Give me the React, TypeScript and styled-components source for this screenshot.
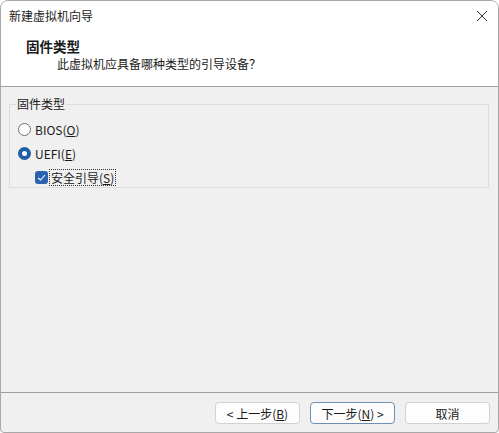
import * as React from 'react';
import styled, { createGlobalStyle } from 'styled-components';

const GlobalStyle = createGlobalStyle`
  html, body {
    margin: 0;
    padding: 0;
    background: #ffffff;
  }
  body {
    font-family: "Noto Sans CJK SC", "Noto Sans", sans-serif;
    font-size: 12px;
    color: #1a1a1a;
  }
`;

const Window = styled.div`
  box-sizing: border-box;
  width: 499px;
  height: 433px;
  display: flex;
  flex-direction: column;
  border: 1px solid #a8a8a8;
  border-radius: 8px 8px 4px 4px;
  overflow: hidden;
  background: #f0f0f0;
`;

const TitleBar = styled.div`
  height: 29px;
  display: flex;
  align-items: center;
  justify-content: space-between;
  padding: 0 10px 0 8px;
  background: #ffffff;
`;

const TitleText = styled.span`
  font-size: 12px;
  line-height: 16px;
`;

const CloseButton = styled.div`
  width: 12px;
  height: 12px;
  display: flex;
  align-items: center;
  justify-content: center;
`;

const Header = styled.div`
  height: 57px;
  background: #ffffff;
  border-bottom: 1px solid #a0a0a0;
  display: flex;
  flex-direction: column;
  padding: 8px 0 0 25px;
  box-sizing: border-box;
  gap: 2px;
`;

const HeaderTitle = styled.div`
  font-weight: bold;
  font-size: 13.5px;
  line-height: 16px;
`;

const HeaderSub = styled.div`
  line-height: 16px;
  padding-left: 31px;
`;

const Body = styled.div`
  flex: 1;
  padding: 9px 9px 0 8px;
`;

const GroupBox = styled.fieldset`
  margin: 0;
  padding: 8px 0 0 0;
  border: 1px solid #dcdcdc;
  height: 92px;
  box-sizing: border-box;
  display: flex;
  flex-direction: column;
  gap: 4.5px;
`;

const Legend = styled.legend`
  margin-left: 6px;
  padding: 0 1px;
  line-height: 16px;
`;

const OptionRow = styled.div<{ $indent?: boolean }>`
  height: 20px;
  display: flex;
  align-items: center;
  gap: ${(p) => (p.$indent ? '2px' : '3px')};
  padding-left: ${(p) => (p.$indent ? '25px' : '8px')};
`;

const Radio = styled.span<{ $checked?: boolean }>`
  box-sizing: border-box;
  width: 13px;
  height: 13px;
  border-radius: 50%;
  border: ${(p) => (p.$checked ? '4px solid #1f5ea8' : '1px solid #6f6f6f')};
  background: #ffffff;
`;

const CheckBox = styled.span`
  width: 13px;
  height: 13px;
  border-radius: 3px;
  background: #2a64b0;
  display: flex;
  align-items: center;
  justify-content: center;
`;

const Label = styled.span<{ $focused?: boolean }>`
  line-height: 15px;
  outline: ${(p) => (p.$focused ? '1px dotted #333' : 'none')};
  padding: 0 1px;
`;

const Key = styled.span`
  text-decoration: underline;
`;

const Footer = styled.div`
  height: 40px;
  border-top: 1px solid #a0a0a0;
  display: flex;
  justify-content: flex-end;
  align-items: flex-start;
  gap: 10px;
  padding: 9px 8px 0 0;
  box-sizing: border-box;
`;

const Button = styled.button<{ $default?: boolean }>`
  width: 85px;
  height: 22px;
  font-family: inherit;
  font-size: 12px;
  color: #1a1a1a;
  background: #fdfdfd;
  border: 1px solid ${(p) => (p.$default ? '#6e8fb4' : '#d2d2d2')};
  border-radius: 4px;
  padding: 0;
  display: flex;
  align-items: center;
  justify-content: center;
`;

const App: React.FunctionComponent = () => (
  <>
    <GlobalStyle />
    <Window>
      <TitleBar>
        <TitleText>新建虚拟机向导</TitleText>
        <CloseButton>
          <svg width="12" height="12" viewBox="0 0 12 12">
            <path d="M1 1 L11 11 M11 1 L1 11" stroke="#333" strokeWidth="1" fill="none" />
          </svg>
        </CloseButton>
      </TitleBar>
      <Header>
        <HeaderTitle>固件类型</HeaderTitle>
        <HeaderSub>此虚拟机应具备哪种类型的引导设备？</HeaderSub>
      </Header>
      <Body>
        <GroupBox>
          <Legend>固件类型</Legend>
          <OptionRow>
            <Radio />
            <Label>
              BIOS(<Key>O</Key>)
            </Label>
          </OptionRow>
          <OptionRow>
            <Radio $checked />
            <Label>
              UEFI(<Key>E</Key>)
            </Label>
          </OptionRow>
          <OptionRow $indent>
            <CheckBox>
              <svg width="9" height="9" viewBox="0 0 9 9">
                <path d="M1 4.8 L3.4 7 L8 2" stroke="#fff" strokeWidth="1.1" fill="none" />
              </svg>
            </CheckBox>
            <Label $focused>
              安全引导(<Key>S</Key>)
            </Label>
          </OptionRow>
        </GroupBox>
      </Body>
      <Footer>
        <Button>
          &lt; 上一步(<Key>B</Key>)
        </Button>
        <Button $default>
          下一步(<Key>N</Key>) &gt;
        </Button>
        <Button>取消</Button>
      </Footer>
    </Window>
  </>
);

export default App;
